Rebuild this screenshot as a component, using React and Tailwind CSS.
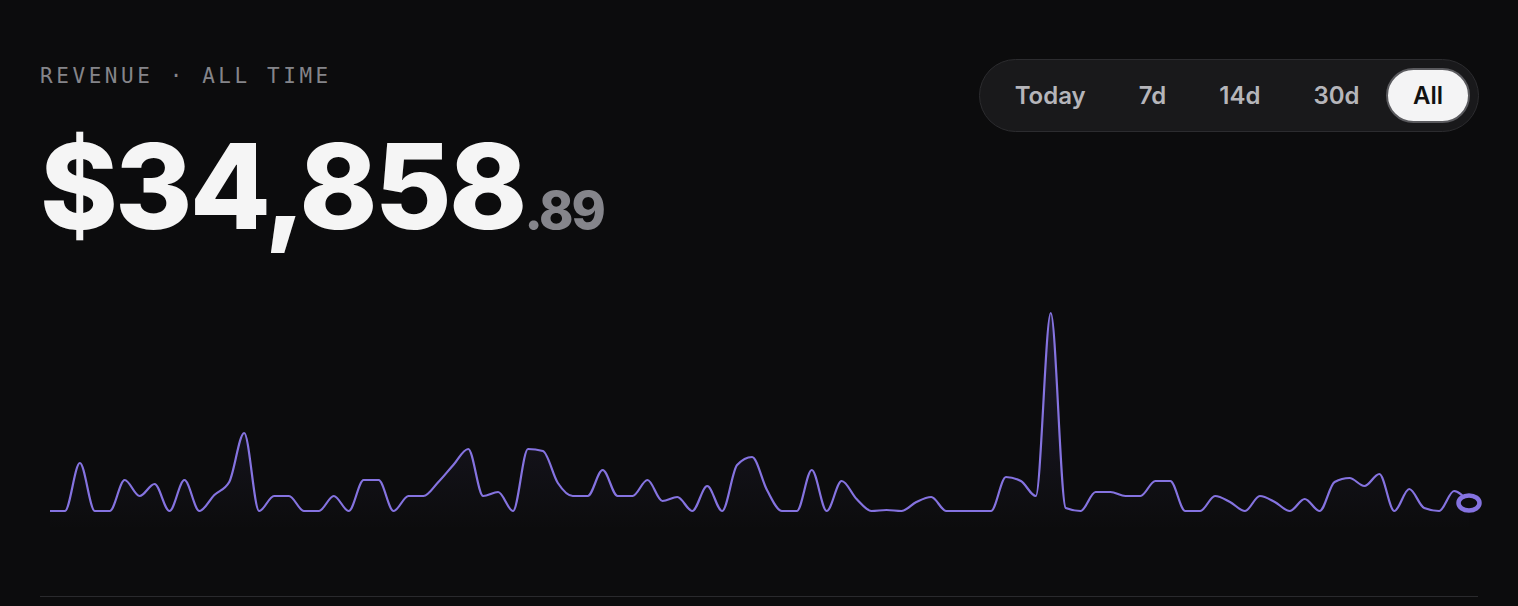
import React, { useMemo } from "react";

const ranges = ["Today", "7d", "14d", "30d", "All"];

// pixel heights read off the chart, one per day
const values = [
  511, 511, 463, 511, 511, 480, 496, 484, 511, 480, 511, 495, 482, 433, 511, 496,
  496, 511, 511, 496, 511, 480, 480, 511, 496, 496, 482, 465, 449, 496, 492, 511,
  449, 451, 483, 496, 496, 470, 496, 496, 480, 501, 497, 511, 486, 511, 465, 457,
  490, 511, 511, 470, 511, 481, 499, 511, 510, 511, 502, 497, 511, 511, 511, 511,
  477, 481, 496, 313, 508, 511, 492, 492, 496, 496, 481, 481, 511, 511, 496, 502,
  511, 496, 502, 511, 499, 511, 482, 478, 486, 474, 511, 489, 508, 511, 491, 503,
];

const CHART_TOP = 290;
const CHART_H = 240;

function slope3(x0, y0, x1, y1, x2, y2) {
  const h0 = x1 - x0;
  const h1 = x2 - x1;
  const s0 = (y1 - y0) / h0;
  const s1 = (y2 - y1) / h1;
  const p = (s0 * h1 + s1 * h0) / (h0 + h1);
  const sign = (v) => (v < 0 ? -1 : 1);
  return (sign(s0) + sign(s1)) * Math.min(Math.abs(s0), Math.abs(s1), 0.5 * Math.abs(p)) || 0;
}

function monotonePath(pts) {
  const n = pts.length;
  const t = new Array(n);
  for (let i = 1; i < n - 1; i++) {
    t[i] = slope3(pts[i - 1][0], pts[i - 1][1], pts[i][0], pts[i][1], pts[i + 1][0], pts[i + 1][1]);
  }
  const h0 = pts[1][0] - pts[0][0];
  t[0] = (3 * (pts[1][1] - pts[0][1]) / h0 - t[1]) / 2;
  const hn = pts[n - 1][0] - pts[n - 2][0];
  t[n - 1] = (3 * (pts[n - 1][1] - pts[n - 2][1]) / hn - t[n - 2]) / 2;

  let d = `M${pts[0][0]},${pts[0][1]}`;
  for (let i = 0; i < n - 1; i++) {
    const [x0, y0] = pts[i];
    const [x1, y1] = pts[i + 1];
    const dx = (x1 - x0) / 3;
    d += ` C${(x0 + dx).toFixed(2)},${(y0 + dx * t[i]).toFixed(2)} ${(x1 - dx).toFixed(2)},${(y1 - dx * t[i + 1]).toFixed(2)} ${x1.toFixed(2)},${y1.toFixed(2)}`;
  }
  return d;
}

function RevenueChart() {
  const { line, area, last } = useMemo(() => {
    const step = 1419 / (values.length - 1);
    const pts = values.map((v, i) => [10 + i * step, v - CHART_TOP]);
    const line = monotonePath(pts);
    const end = pts[pts.length - 1];
    const area = `${line} L${end[0]},${CHART_H} L${pts[0][0]},${CHART_H} Z`;
    return { line, area, last: end };
  }, []);

  return (
    <svg width="1438" height={CHART_H} viewBox={`0 0 1438 ${CHART_H}`} className="block overflow-visible">
      <defs>
        <linearGradient id="revFill" x1="0" y1="0" x2="0" y2="1">
          <stop offset="0%" stopColor="#8573e0" stopOpacity="0.16" />
          <stop offset="100%" stopColor="#8573e0" stopOpacity="0" />
        </linearGradient>
      </defs>
      <path d={area} fill="url(#revFill)" />
      <path d={line} fill="none" stroke="#8573e0" strokeWidth="2.2" strokeLinejoin="round" />
      <ellipse cx={last[0]} cy={last[1]} rx="10.5" ry="7.5" fill="#0c0c0d" stroke="#8573e0" strokeWidth="4.5" />
    </svg>
  );
}

export default function App() {
  return (
    <main className="min-h-[606px] bg-[#0c0c0d] px-10 font-['Inter','Noto_Sans',sans-serif]">
      <div className="flex items-start justify-between pt-[59px]">
        <div>
          <p className="mt-[3px] font-['DejaVu_Sans_Mono','Liberation_Mono',monospace] text-[21px] leading-[28px] tracking-[0.17em] text-[#85858a]">
            REVENUE · ALL TIME
          </p>
          <div className="mt-[37px] flex h-[118px] items-baseline">
            <span className="text-[118px] leading-[118px] font-extrabold tracking-[-0.024em] text-[#f5f5f5]">
              $34,858
            </span>
            <span className="text-[52px] leading-[52px] font-extrabold tracking-[-0.04em] text-[#85858b]">.89</span>
          </div>
        </div>
        <div className="-mr-px flex rounded-full border border-[#2c2c2f] bg-[#19191b] p-2">
          {ranges.map((r) => (
            <button
              key={r}
              className={
                r === "All"
                  ? "h-[55px] rounded-full border-2 border-[#5a5a5e] bg-[#f4f4f5] px-[25px] text-[24px] font-semibold text-[#111]"
                  : "h-[55px] rounded-full px-[26.5px] text-[24px] font-semibold text-[#b5b5ba]"
              }
            >
              {r}
            </button>
          ))}
        </div>
      </div>
      <div className="mt-[45px]">
        <RevenueChart />
      </div>
      <div className="mt-[66px] h-px bg-[#2a2a2d]" />
    </main>
  );
}
